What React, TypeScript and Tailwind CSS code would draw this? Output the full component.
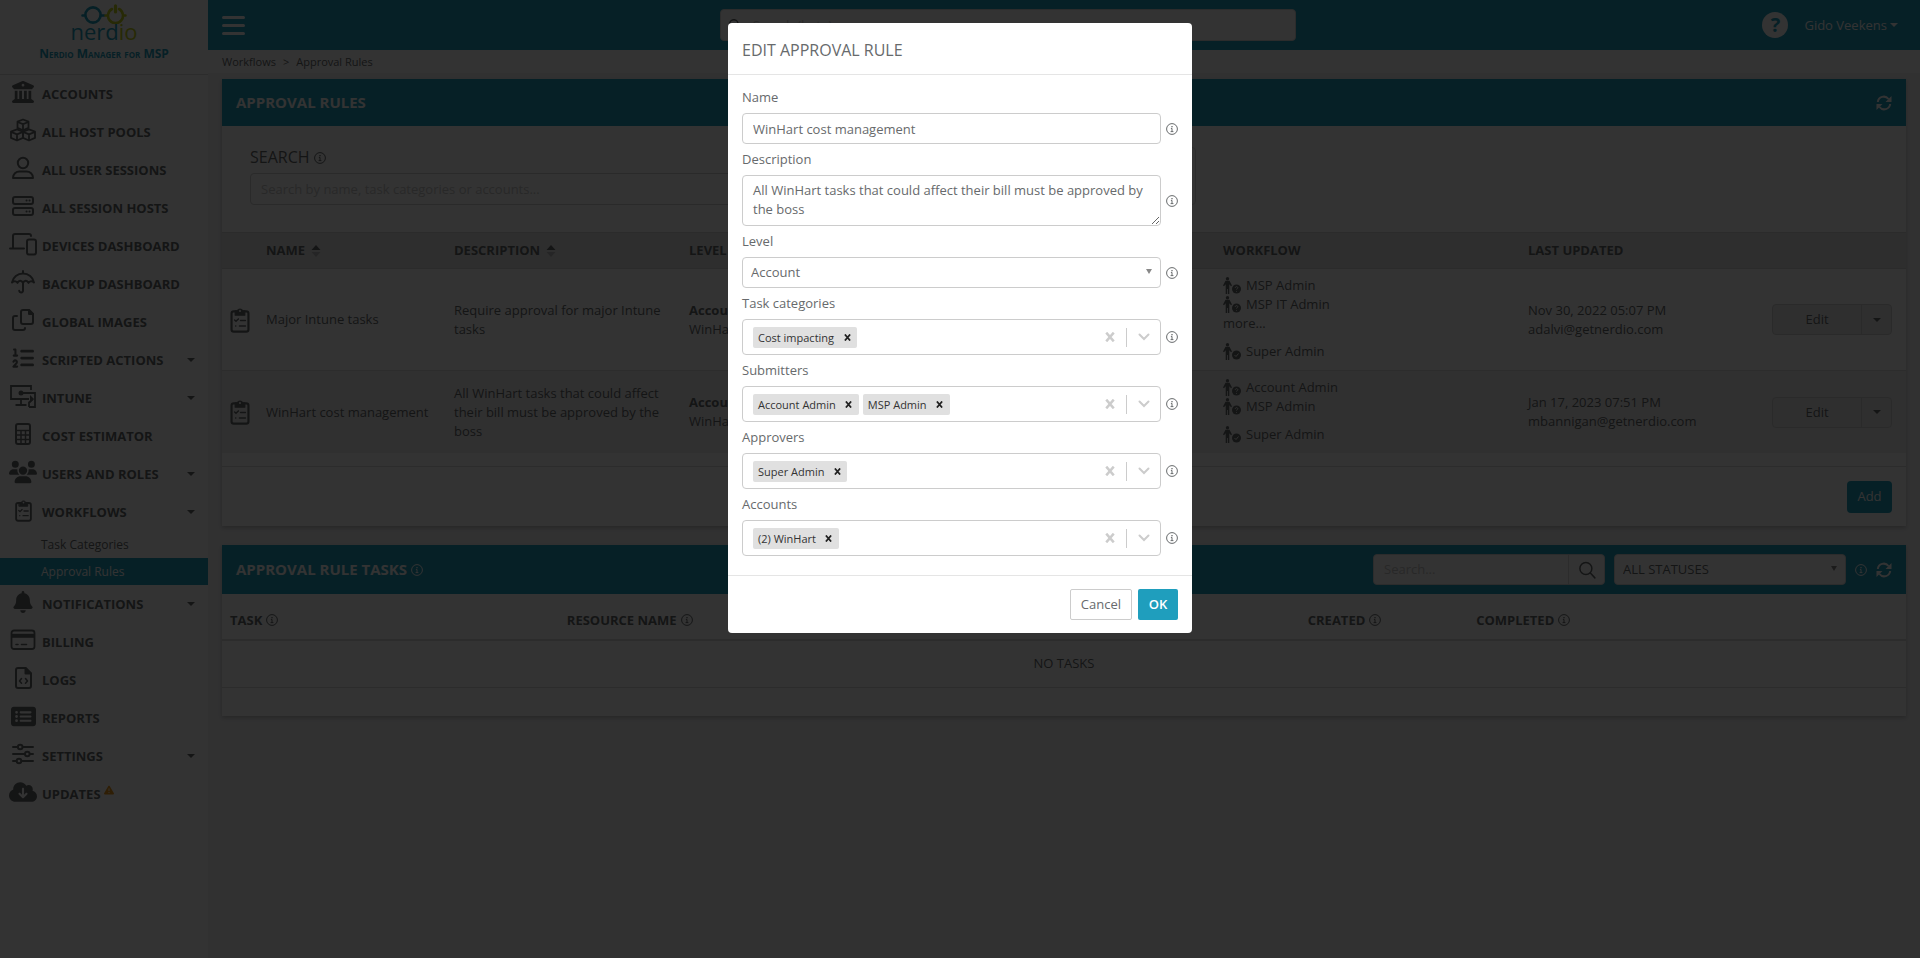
import { useState } from 'react';
import type { ReactNode } from 'react';
import {
  FaBell,
  FaBuildingColumns,
  FaCloudArrowDown,
  FaListOl,
  FaMagnifyingGlass,
  FaRectangleList,
  FaTriangleExclamation,
  FaUsers,
} from 'react-icons/fa6';

type IconProps = { className?: string };

const Stroke = ({ className = 'size-6', children }: IconProps & { children: ReactNode }) => (
  <svg
    viewBox="0 0 24 24"
    className={className}
    fill="none"
    stroke="currentColor"
    strokeWidth="2"
    strokeLinecap="round"
    strokeLinejoin="round"
    aria-hidden="true"
  >
    {children}
  </svg>
);

const CubesIcon = () => (
  <svg
    viewBox="0 0 26 24"
    className="h-6 w-[26px]"
    fill="none"
    stroke="currentColor"
    strokeWidth="1.8"
    strokeLinejoin="round"
    aria-hidden="true"
  >
    <path d="M13 1.5l5.5 2.2v6.2L13 12.3 7.5 9.9V3.7z" />
    <path d="M7.5 4l5.5 2.2L18.5 4M13 6.2v6" />
    <path d="M7 11.3l6 2.4v6.2l-6 2.6-6-2.6v-6.2z" />
    <path d="M1 13.9l6 2.4 6-2.4M7 16.3v6" />
    <path d="M19 11.3l6 2.4v6.2l-6 2.6-6-2.6v-6.2z" />
    <path d="M13 13.9l6 2.4 6-2.4M19 16.3v6" />
  </svg>
);

const UserIcon = () => (
  <Stroke>
    <circle cx="12" cy="7" r="5.2" />
    <path d="M2 22c0-4 3-6.5 6.5-6.5h7C19 15.5 22 18 22 22z" />
  </Stroke>
);

const ServerIcon = () => (
  <Stroke>
    <rect x="2" y="3" width="20" height="7" rx="2" />
    <rect x="2" y="14" width="20" height="7" rx="2" />
    <path d="M15.5 6.5h.1M18.5 6.5h.1M15.5 17.5h.1M18.5 17.5h.1" />
  </Stroke>
);

const DevicesIcon = () => (
  <svg
    viewBox="0 0 28 24"
    className="h-6 w-7"
    fill="none"
    stroke="currentColor"
    strokeWidth="2"
    strokeLinecap="round"
    strokeLinejoin="round"
    aria-hidden="true"
  >
    <path d="M4 16V4a2 2 0 0 1 2-2h14a2 2 0 0 1 2 2M1 16.5h14" />
    <rect x="18" y="7.5" width="9" height="15" rx="2" />
  </svg>
);

const UmbrellaIcon = () => (
  <Stroke className="h-6 w-[26px]">
    <path d="M12 1v2M1 12.5C2 7 6.5 3.5 12 3.5S22 7 23 12.5c-1.5-1.8-4.5-1.8-5.5.4-1.2-2.6-4-3.4-5.5 0-1.5-3.4-4.3-2.6-5.5 0-1-2.2-4-2.2-5.5-.4zM12 13v7.5c0 2.4-3.5 2.6-3.8.3" />
  </Stroke>
);

const CopyIcon = () => (
  <Stroke>
    <path d="M12 2h6l4 4v8a2 2 0 0 1-2 2h-8a2 2 0 0 1-2-2V4a2 2 0 0 1 2-2z" />
    <path d="M18 2v4h4z" fill="currentColor" />
    <path d="M6 8H4a2 2 0 0 0-2 2v10a2 2 0 0 0 2 2h8a2 2 0 0 0 2-2" />
  </Stroke>
);

const IntuneIcon = () => (
  <svg
    viewBox="0 0 26 24"
    className="h-6 w-[26px]"
    fill="none"
    stroke="currentColor"
    strokeWidth="1.8"
    aria-hidden="true"
  >
    <path d="M21 6V2H1v13h18M11 15v5M5.5 21h11M11 9h14v14h-6M19 23v-4.5l4-3.5" />
    <circle cx="11" cy="9" r="2.5" fill="currentColor" stroke="none" />
    <path d="M20 11l4 4-4 4z" fill="currentColor" stroke="none" />
  </svg>
);

const CalculatorIcon = () => (
  <Stroke>
    <rect x="5" y="2" width="14" height="20" rx="2" />
    <path d="M5 8.5h14M5 13h14M5 17.5h14M10 8.5V22M14.5 8.5V22" strokeWidth="1.5" strokeLinecap="butt" />
  </Stroke>
);

const ClipboardIcon = ({ className }: IconProps) => (
  <svg
    viewBox="0 0 18 24"
    className={className}
    fill="none"
    stroke="currentColor"
    strokeWidth="2"
    strokeLinecap="round"
    aria-hidden="true"
  >
    <rect x="1.2" y="4" width="15.6" height="18.8" rx="2" />
    <path d="M4.5 3.5h2a2.7 2.7 0 0 1 5 0h2v4h-9z" fill="currentColor" strokeWidth="1" strokeLinejoin="round" />
    <circle cx="9" cy="3.6" r=".9" fill="white" stroke="none" />
    <path d="M4 12l1.3 1.2L7.5 11M9.5 12.5H14M5 17.5h.1M8.5 17.5H14" strokeWidth="1.4" />
  </svg>
);

const CardIcon = () => (
  <svg
    viewBox="0 0 26 24"
    className="h-6 w-[26px]"
    fill="none"
    stroke="currentColor"
    strokeWidth="1.8"
    strokeLinecap="round"
    aria-hidden="true"
  >
    <rect x="1.5" y="2.5" width="23" height="18.5" rx="2.5" />
    <path d="M1.5 7.8h23" strokeWidth="4" strokeLinecap="butt" />
    <path d="M6 16.5h2M11.5 16.5h5" strokeWidth="1.6" />
  </svg>
);

const FileCodeIcon = () => (
  <Stroke>
    <path d="M7 2h7.5L20 7.5V20a2 2 0 0 1-2 2H7a2 2 0 0 1-2-2V4a2 2 0 0 1 2-2z" />
    <path d="M14.5 2v5.5H20z" fill="currentColor" />
    <path d="M10.5 12.5l-2 2.5 2 2.2M14.5 12.5l2 2.5-2 2.2" strokeWidth="1.6" />
  </Stroke>
);

const SlidersIcon = () => (
  <Stroke>
    <path d="M2 5h4.5M12 5h10M2 12h11.5M19 12h3M2 19h3M11 19h11" />
    <circle cx="9.2" cy="5" r="2.3" />
    <circle cx="16.3" cy="12" r="2.3" />
    <circle cx="8" cy="19" r="2.3" />
  </Stroke>
);

const InfoIcon = () => (
  <svg viewBox="0 0 12 12" className="size-3" fill="none" stroke="currentColor" aria-hidden="true">
    <circle cx="6" cy="6" r="5.4" />
    <path d="M6 3v1.2" strokeWidth="1.3" />
    <path d="M4.9 5.4H6v3M4.6 8.6h2.8" />
  </svg>
);

const RefreshIcon = () => (
  <svg viewBox="0 0 16 16" className="size-4" fill="none" stroke="currentColor" strokeWidth="2" aria-hidden="true">
    <path d="M1.8 7a6 6 0 0 1 10.7-3M14.2 9a6 6 0 0 1-10.7 3" />
    <path d="M15.5 1v6h-6zM.5 15V9h6z" fill="currentColor" stroke="none" />
  </svg>
);

const SortIcon = () => (
  <svg viewBox="0 0 10 12" className="h-3 w-[10px]" fill="currentColor" aria-hidden="true">
    <path d="M5 0l4.5 5H.5z" />
    <path d="M5 12L.5 7h9z" opacity=".35" />
  </svg>
);

const Caret = () => (
  <svg viewBox="0 0 8 4" className="h-1 w-2" fill="currentColor" aria-hidden="true">
    <path d="M0 0h8L4 4z" />
  </svg>
);

const SelectArrow = () => (
  <svg viewBox="0 0 6 5" className="pointer-events-none absolute top-3 right-[9px] h-[5px] w-[6px] fill-[#888888]" aria-hidden="true">
    <path d="M0 0h6L3 5z" />
  </svg>
);

const PersonIcon = ({ approver }: { approver?: boolean }) => (
  <svg viewBox="0 0 18 17" className="h-[17px] w-[18px]" fill="currentColor" aria-hidden="true">
    <circle cx="4.5" cy="1.7" r="1.7" />
    <path d="M2.5 3.8h4L9 8.5l-1 .8-1.7-2V17H4.9v-5h-.8v5H2.7V7.3L1 9.300 0 8.500z" />
    <circle cx="13.5" cy="12" r="4.5" />
    <path
      d={approver ? 'M11.5 12l1.5 1.5 2.5-3' : 'M12.2 10.8c.2-1.7 2.7-1.5 2.6.1-.1.8-1.3.8-1.3 1.7M13.5 14.2v.7'}
      fill="none"
      stroke="white"
      strokeWidth=".9"
    />
  </svg>
);

const CrossIcon = ({ className }: IconProps) => (
  <svg viewBox="0 0 8 8" className={className} fill="none" stroke="currentColor" strokeWidth="2" aria-hidden="true">
    <path d="M1 .5l6 7M7 .5l-6 7" />
  </svg>
);

const Logo = () => (
  <svg viewBox="0 0 46 20" className="h-5 w-[46px]" fill="none" strokeWidth="2.6" strokeLinecap="round" aria-hidden="true">
    <g stroke="#1f9ebd">
      <circle cx="12" cy="11" r="7.6" />
      <path d="M1.5 11.5h2M20 11.5h3" />
    </g>
    <g stroke="#c3cf21">
      <path d="M31 5a7.5 7.5 0 1 0 7 0" />
      <path d="M34.5 1.8V8" strokeWidth="3.2" />
      <path d="M24.5 11.5h2M43 11.5h1.5" />
    </g>
  </svg>
);

type NavItem = { label: string; icon: ReactNode; menu?: boolean; alert?: boolean; children?: string[] };

const navItems: NavItem[] = [
  { label: 'ACCOUNTS', icon: <FaBuildingColumns className="size-[22px]" /> },
  { label: 'ALL HOST POOLS', icon: <CubesIcon /> },
  { label: 'ALL USER SESSIONS', icon: <UserIcon /> },
  { label: 'ALL SESSION HOSTS', icon: <ServerIcon /> },
  { label: 'DEVICES DASHBOARD', icon: <DevicesIcon /> },
  { label: 'BACKUP DASHBOARD', icon: <UmbrellaIcon /> },
  { label: 'GLOBAL IMAGES', icon: <CopyIcon /> },
  { label: 'SCRIPTED ACTIONS', icon: <FaListOl className="size-[22px]" />, menu: true },
  { label: 'INTUNE', icon: <IntuneIcon />, menu: true },
  { label: 'COST ESTIMATOR', icon: <CalculatorIcon /> },
  { label: 'USERS AND ROLES', icon: <FaUsers className="size-7" />, menu: true },
  {
    label: 'WORKFLOWS',
    icon: <ClipboardIcon className="h-[23px] w-[17px]" />,
    menu: true,
    children: ['Task Categories', 'Approval Rules'],
  },
  { label: 'NOTIFICATIONS', icon: <FaBell className="size-[22px]" />, menu: true },
  { label: 'BILLING', icon: <CardIcon /> },
  { label: 'LOGS', icon: <FileCodeIcon /> },
  { label: 'REPORTS', icon: <FaRectangleList className="size-[25px]" /> },
  { label: 'SETTINGS', icon: <SlidersIcon />, menu: true },
  { label: 'UPDATES', icon: <FaCloudArrowDown className="size-7" />, alert: true },
];

const rules = [
  {
    name: 'Major Intune tasks',
    description: 'Require approval for major Intune tasks',
    submitters: ['MSP Admin', 'MSP IT Admin'],
    more: true,
    approvers: ['Super Admin'],
    updated: 'Nov 30, 2022 05:07 PM',
    by: 'adalvi@getnerdio.com',
  },
  {
    name: 'WinHart cost management',
    description: 'All WinHart tasks that could affect their bill must be approved by the boss',
    submitters: ['Account Admin', 'MSP Admin'],
    more: false,
    approvers: ['Super Admin'],
    updated: 'Jan 17, 2023 07:51 PM',
    by: 'mbannigan@getnerdio.com',
  },
];

const Sidebar = () => (
  <aside className="w-[208px] shrink-0 bg-white">
    <div className="flex h-[75px] flex-col items-center border-b border-[#dddddd] pt-1">
      <Logo />
      <div className="text-[22px] leading-[14px] text-[#1f9ebd]">
        nerd<span className="text-[#c3cf21]">io</span>
      </div>
      <div className="mt-2 text-[12px] leading-4 font-bold text-[#1f9ebd] [font-variant:small-caps]">
        Nerdio Manager for MSP
      </div>
    </div>
    <nav>
      {navItems.map(item => (
        <div key={item.label}>
          <a href="#" className="flex h-[38px] items-center pr-[13px] pl-[9px] font-bold">
            <span className="flex w-7 justify-center pb-1">{item.icon}</span>
            <span className="ml-[5px]">{item.label}</span>
            {item.alert && <FaTriangleExclamation className="mb-2 ml-[3px] size-[10px] text-[#e8981c]" />}
            {item.menu && (
              <span className="ml-auto">
                <Caret />
              </span>
            )}
          </a>
          {item.children?.map(child => (
            <a
              key={child}
              href="#"
              className={
                child === 'Approval Rules'
                  ? 'flex h-[27px] items-center bg-[#1f9ebd] pl-[41px] text-[12px] text-white'
                  : 'flex h-[27px] items-center pl-[41px] text-[12px]'
              }
            >
              {child}
            </a>
          ))}
        </div>
      ))}
    </nav>
  </aside>
);

const TopBar = () => (
  <header className="flex h-[50px] items-center justify-between bg-[#1f9ebd] pr-[22px] pl-[14px] text-white">
    <button type="button" aria-label="Toggle menu" className="flex w-[23px] flex-col gap-[5px]">
      <span className="h-[3px] rounded-sm bg-white" />
      <span className="h-[3px] rounded-sm bg-white" />
      <span className="h-[3px] rounded-sm bg-white" />
    </button>
    <div className="ml-2 flex h-8 w-[576px] items-center rounded border border-[#dddddd] bg-white px-2 text-[#676a6c]">
      <FaMagnifyingGlass className="size-3" />
      <input aria-label="Search" placeholder="Search (beta)" className="ml-3 flex-1 outline-none placeholder:text-[#c8c8c8]" />
    </div>
    <div className="flex items-center">
      <button
        type="button"
        aria-label="Help"
        className="size-[26px] rounded-full bg-white text-[20px] leading-[26px] font-bold text-[#1f9ebd]"
      >
        ?
      </button>
      <button type="button" className="ml-4 flex items-center gap-[3px]">
        Gido Veekens
        <Caret />
      </button>
    </div>
  </header>
);

const PersonLine = ({ name, approver }: { name: string; approver?: boolean }) => (
  <div className="flex h-[19px] items-center gap-[5px]">
    <PersonIcon approver={approver} />
    {name}
  </div>
);

const RulesCard = () => (
  <section className="bg-white shadow-[0_2px_4px_rgba(0,0,0,0.2)]">
    <div className="flex h-[47px] items-center justify-between bg-[#1f9ebd] px-[14px] text-white">
      <h2 className="text-[15px] font-bold">APPROVAL RULES</h2>
      <button type="button" aria-label="Refresh rules">
        <RefreshIcon />
      </button>
    </div>
    <div className="flex h-[106px] gap-7 px-7">
      <div className="w-[62%] max-w-[560px] pt-[18px]">
        <label htmlFor="rule-search" className="mb-[2px] flex h-[27px] items-center gap-1 text-[16px]">
          SEARCH <InfoIcon />
        </label>
        <input
          id="rule-search"
          placeholder="Search by name, task categories or accounts..."
          className="h-8 w-full rounded border border-[#d0d0d0] px-[10px] outline-none placeholder:text-[#c8c8c8]"
        />
      </div>
      <div className="mt-[21px] h-[58px] w-[358px] rounded border border-[#dddddd]" />
    </div>
    <table className="w-full table-fixed text-left">
      <thead>
        <tr className="h-9 border-y border-[#d5d5d5] bg-[#e6e6e6]">
          <th className="w-9" aria-label="Type" />
          <th className="w-[188px] px-2 font-bold">
            <span className="flex items-center gap-[6px]">
              NAME <SortIcon />
            </span>
          </th>
          <th className="w-[235px] px-2 font-bold">
            <span className="flex items-center gap-[6px]">
              DESCRIPTION <SortIcon />
            </span>
          </th>
          <th className="px-2 font-bold">LEVEL</th>
          <th className="w-[305px] px-2 font-bold">WORKFLOW</th>
          <th className="w-[236px] px-2 font-bold">LAST UPDATED</th>
          <th className="w-[150px]" aria-label="Actions" />
        </tr>
      </thead>
      <tbody>
        {rules.map(rule => (
          <tr key={rule.name} className="border-b border-[#dddddd] even:border-b-0 even:bg-[#f0f0f0]">
            <td className="pl-2">
              <ClipboardIcon className="h-[26px] w-5" />
            </td>
            <td className="px-2">{rule.name}</td>
            <td className="px-2">{rule.description}</td>
            <td className="px-2">
              <b>Account</b>
              <br />
              WinHart
            </td>
            <td className="px-2 pt-[7px] pb-[9px]">
              {rule.submitters.map(name => (
                <PersonLine key={name} name={name} />
              ))}
              {rule.more && <a href="#">more...</a>}
              <div className="mt-[9px]">
                {rule.approvers.map(name => (
                  <PersonLine key={name} name={name} approver />
                ))}
              </div>
            </td>
            <td className="px-2">
              {rule.updated}
              <br />
              {rule.by}
            </td>
            <td className="pr-[14px]">
              <div className="ml-auto flex h-[31px] w-[120px] rounded border border-[#d0d0d0] bg-[#ececec]">
                <button type="button" className="flex-1">
                  Edit
                </button>
                <button
                  type="button"
                  aria-label="More actions"
                  className="flex w-[30px] items-center justify-center border-l border-[#d0d0d0]"
                >
                  <Caret />
                </button>
              </div>
            </td>
          </tr>
        ))}
      </tbody>
    </table>
    <div className="mt-[13px] flex h-[60px] items-center justify-end border-t border-[#dddddd] pr-[14px]">
      <button type="button" className="h-8 w-[45px] rounded bg-[#1f9ebd] text-white">
        Add
      </button>
    </div>
  </section>
);

const TasksCard = () => (
  <section className="mt-[19px] bg-white shadow-[0_2px_4px_rgba(0,0,0,0.2)]">
    <div className="flex h-[49px] items-center bg-[#1f9ebd] px-[14px] text-white">
      <h2 className="flex items-center gap-1 text-[15px] font-bold">
        APPROVAL RULE TASKS <InfoIcon />
      </h2>
      <div className="ml-auto flex h-[31px] w-[232px] rounded border border-[#dddddd] bg-white text-[#676a6c]">
        <input
          aria-label="Search tasks"
          placeholder="Search..."
          className="min-w-0 flex-1 px-[10px] outline-none placeholder:text-[#c8c8c8]"
        />
        <button type="button" aria-label="Search" className="flex w-9 items-center justify-center border-l border-[#dddddd]">
          <Stroke className="size-[18px]">
            <circle cx="10.5" cy="10" r="8" />
            <path d="M16.5 16l6 6.5" />
          </Stroke>
        </button>
      </div>
      <div className="relative mr-[9px] ml-[9px]">
        <select
          aria-label="Status"
          className="h-[31px] w-[232px] appearance-none rounded border border-[#dddddd] bg-white px-2 text-[#676a6c]"
        >
          <option>ALL STATUSES</option>
        </select>
        <SelectArrow />
      </div>
      <InfoIcon />
      <button type="button" aria-label="Refresh tasks" className="ml-[9px]">
        <RefreshIcon />
      </button>
    </div>
    <table className="w-full table-fixed text-left">
      <thead>
        <tr className="h-[46px] border-b-2 border-[#dddddd]">
          <th className="w-[20%] px-2 pt-[7px]">
            <span className="flex items-center gap-1">
              TASK <InfoIcon />
            </span>
          </th>
          <th className="w-[44%] px-2 pt-[7px]">
            <span className="flex items-center gap-1">
              RESOURCE NAME <InfoIcon />
            </span>
          </th>
          <th className="w-[10%] px-2 pt-[7px]">
            <span className="flex items-center gap-1">
              CREATED <InfoIcon />
            </span>
          </th>
          <th className="px-2 pt-[7px]">
            <span className="flex items-center gap-1">
              COMPLETED <InfoIcon />
            </span>
          </th>
        </tr>
      </thead>
      <tbody>
        <tr className="h-[47px] border-b border-[#dddddd]">
          <td colSpan={4} className="text-center">
            NO TASKS
          </td>
        </tr>
      </tbody>
    </table>
    <div className="h-7" />
  </section>
);

const Field = ({ id, label, children }: { id: string; label: string; children: ReactNode }) => (
  <div>
    <label htmlFor={id} className="flex h-[31px] items-center">
      {label}
    </label>
    <div className="flex items-center gap-[5px]">
      <div className="min-w-0 flex-1">{children}</div>
      <InfoIcon />
    </div>
  </div>
);

const MultiSelect = ({ id, initial }: { id: string; initial: string[] }) => {
  const [values, setValues] = useState(initial);

  return (
    <div className="flex h-9 items-center rounded border border-[#cccccc] pl-[10px]">
      <div className="flex min-w-0 flex-1 gap-1">
        {values.map(value => (
          <span
            key={value}
            className="flex h-[21px] shrink-0 items-center rounded-xs bg-[#e0e0e0] pl-[5px] text-[11px] text-[#333333]"
          >
            {value}
            <button
              type="button"
              aria-label={`Remove ${value}`}
              className="flex h-full w-[23px] items-center justify-center pl-[3px] text-[#222222]"
              onClick={() => setValues(values.filter(v => v !== value))}
            >
              <CrossIcon className="size-[7px]" />
            </button>
          </span>
        ))}
        <input id={id} className="min-w-0 flex-1 outline-none" />
      </div>
      <button type="button" aria-label="Clear" className="flex w-[33px] justify-center text-[#cccccc]" onClick={() => setValues([])}>
        <CrossIcon className="size-[10px]" />
      </button>
      <span className="h-[19px] w-px bg-[#cccccc]" />
      <button type="button" aria-label="Open" className="flex w-[33px] justify-center text-[#cccccc]">
        <svg viewBox="0 0 12 8" className="h-2 w-3" fill="none" stroke="currentColor" strokeWidth="2" strokeLinecap="round">
          <path d="M1.5 1.5L6 6l4.5-4.5" />
        </svg>
      </button>
    </div>
  );
};

const EditRuleModal = () => (
  <div className="fixed inset-0 flex items-start justify-center bg-black/80 pt-[23px]">
    <form role="dialog" aria-labelledby="dialog-title" className="w-[464px] rounded bg-white" onSubmit={e => e.preventDefault()}>
      <h1 id="dialog-title" className="flex h-[52px] items-center border-b border-[#e5e5e5] px-[14px] pt-[3px] text-[16px]">
        EDIT APPROVAL RULE
      </h1>
      <div className="px-[14px] pt-[7px] pb-[19px]">
        <Field id="name" label="Name">
          <input
            id="name"
            defaultValue="WinHart cost management"
            className="block h-[31px] w-full rounded border border-[#cccccc] px-[10px]"
          />
        </Field>
        <Field id="description" label="Description">
          <textarea
            id="description"
            defaultValue="All WinHart tasks that could affect their bill must be approved by the boss"
            className="block h-[51px] w-full rounded border border-[#cccccc] px-[10px] pt-[5px] leading-[19px]"
          />
        </Field>
        <Field id="level" label="Level">
          <div className="relative">
            <select id="level" className="block h-[31px] w-full appearance-none rounded border border-[#cccccc] px-2">
              <option>Account</option>
            </select>
            <SelectArrow />
          </div>
        </Field>
        <Field id="categories" label="Task categories">
          <MultiSelect id="categories" initial={['Cost impacting']} />
        </Field>
        <Field id="submitters" label="Submitters">
          <MultiSelect id="submitters" initial={['Account Admin', 'MSP Admin']} />
        </Field>
        <Field id="approvers" label="Approvers">
          <MultiSelect id="approvers" initial={['Super Admin']} />
        </Field>
        <Field id="accounts" label="Accounts">
          <MultiSelect id="accounts" initial={['(2) WinHart']} />
        </Field>
      </div>
      <div className="flex justify-end gap-[6px] border-t border-[#e5e5e5] px-[14px] py-[13px]">
        <button type="button" className="h-[31px] rounded-xs border border-[#cccccc] px-[10px]">
          Cancel
        </button>
        <button type="submit" className="h-[31px] w-10 rounded-xs bg-[#1f9ebd] font-semibold text-white">
          OK
        </button>
      </div>
    </form>
  </div>
);

export default function App() {
  return (
    <div className="flex min-h-screen bg-[#f3f3f4] font-['Open_Sans',sans-serif] text-[13px] leading-[19px] text-[#676a6c]">
      <Sidebar />
      <div className="min-w-0 flex-1">
        <TopBar />
        <div className="flex h-[23px] items-center gap-[7px] bg-white pl-[14px] text-[11px]">
          <a href="#">Workflows</a>
          <span>&gt;</span>
          <span>Approval Rules</span>
        </div>
        <main className="px-[14px] pt-[6px]">
          <RulesCard />
          <TasksCard />
        </main>
      </div>
      <EditRuleModal />
    </div>
  );
}
